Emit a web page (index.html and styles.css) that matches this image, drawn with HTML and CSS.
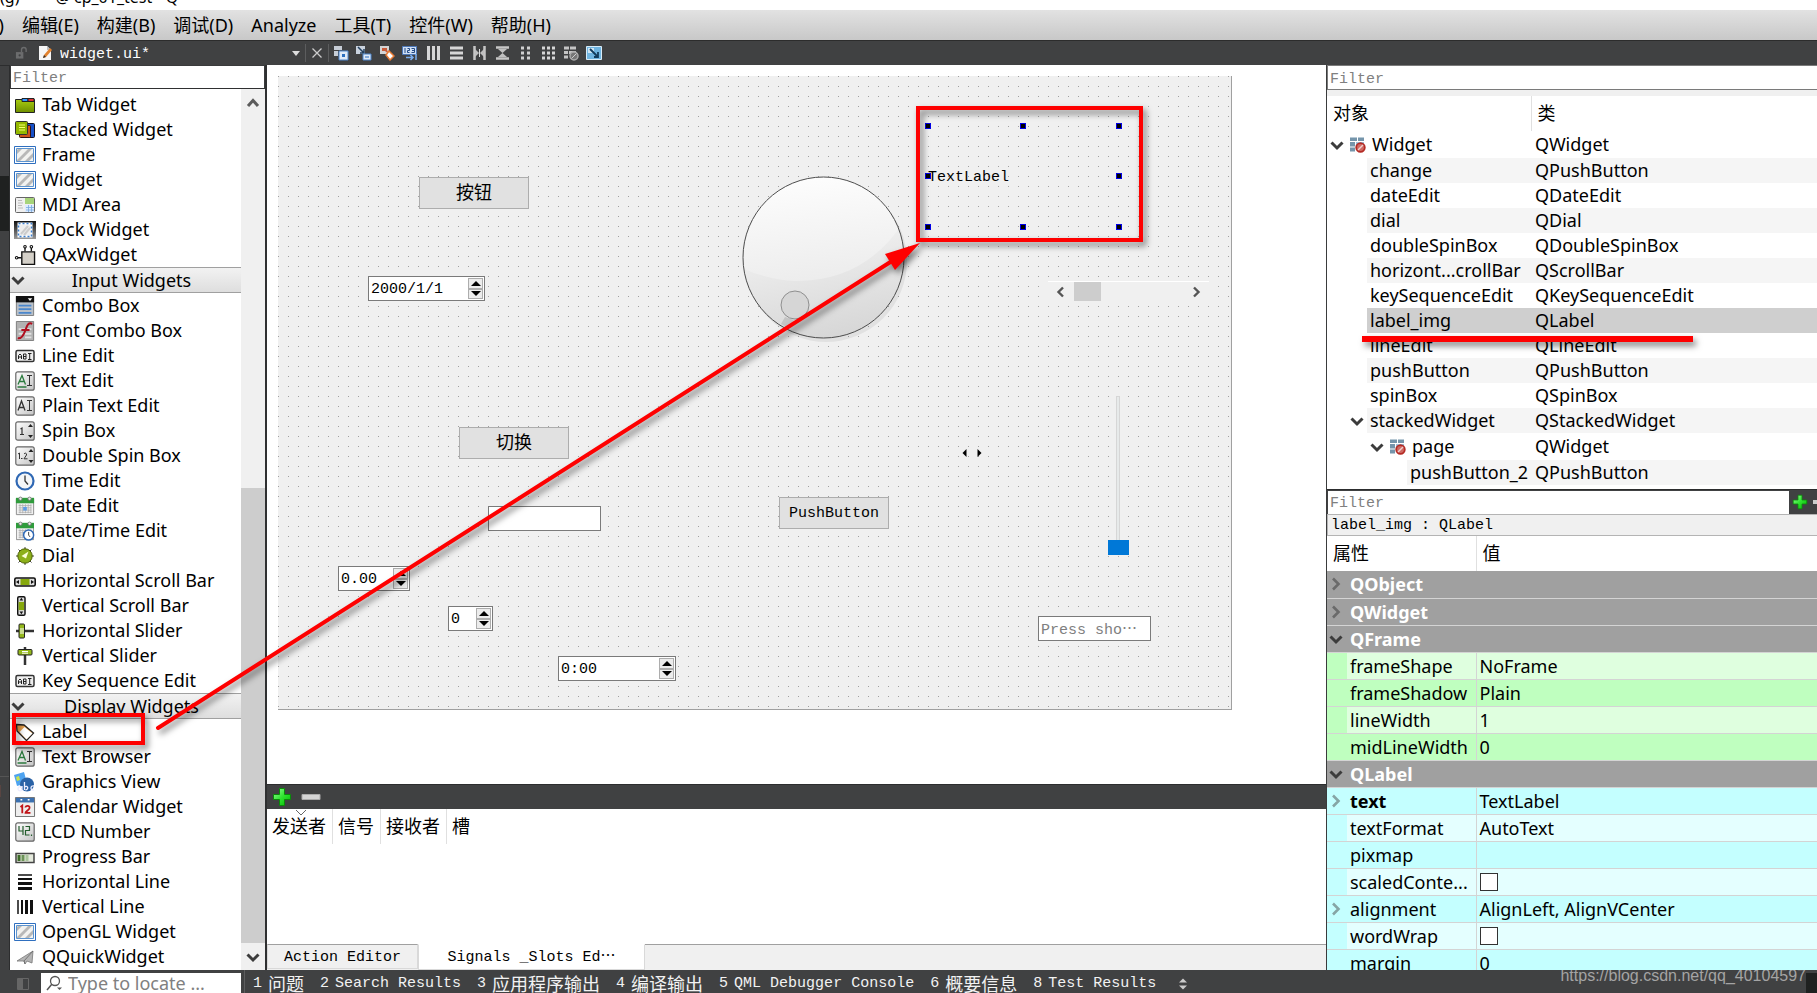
FILE: index.html
```html
<!DOCTYPE html>
<html lang="zh-CN">
<head>
<meta charset="utf-8">
<title>widget.ui</title>
<link rel="stylesheet" href="styles.css">
</head>
<body>
<svg class="defs" aria-hidden="true">
  <defs>
    <linearGradient id="gGreen" x1="0" y1="0" x2="0" y2="1"><stop offset="0" stop-color="#a8cc10"/><stop offset="1" stop-color="#6f8f00"/></linearGradient>
    <linearGradient id="gGrey" x1="0" y1="0" x2="1" y2="1"><stop offset="0" stop-color="#fff"/><stop offset="1" stop-color="#c4c4c4"/></linearGradient>
    <linearGradient id="gPlus" x1="0" y1="0" x2="1" y2="1"><stop offset="0" stop-color="#9f9"/><stop offset=".5" stop-color="#2fe32f"/><stop offset="1" stop-color="#00b400"/></linearGradient>
    <linearGradient id="gDark" x1="0" y1="0" x2="0" y2="1"><stop offset="0" stop-color="#111"/><stop offset="1" stop-color="#999"/></linearGradient>
    <linearGradient id="gDial" x1=".4" y1="0" x2=".6" y2="1"><stop offset="0" stop-color="#fff"/><stop offset="1" stop-color="#d6d6d6"/></linearGradient>
    <linearGradient id="gGloss" x1=".4" y1="0" x2=".6" y2="1"><stop offset="0" stop-color="#fff"/><stop offset="1" stop-color="#ececec"/></linearGradient>
    <clipPath id="dialClip"><circle cx="84.500" cy="83.500" r="80.500"/></clipPath>
  </defs>
  <symbol id="chev-down" viewBox="0 0 14 14"><path d="M1.5 4.5 7 10l5.500-5.500" fill="none" stroke="#3c3c3c" stroke-width="3"/></symbol>
  <symbol id="chev-right" viewBox="0 0 14 14"><path d="M4 1.500 9.500 7 4 12.500" fill="none" stroke="currentColor" stroke-width="2.600"/></symbol>
  <symbol id="chev-up" viewBox="0 0 14 14"><path d="M2 10 7 4.500 12 10" fill="none" stroke="#5c5c5c" stroke-width="3"/></symbol>
  <symbol id="i-tab" viewBox="0 0 20 20"><path d="M.5 4.500h19v13H.5z" fill="url(#gGreen)" stroke="#222"/><path d="M7 3.500h6v3H7z" fill="#39f" stroke="#222"/><path d="M13 3.500h6v3h-6z" fill="#d33" stroke="#222"/></symbol>
  <symbol id="i-stacked" viewBox="0 0 20 20"><rect x="8.500" y="3.500" width="11" height="14" rx="1" fill="#1650c8" stroke="#112"/><rect x="4.500" y="5.500" width="11" height="12" rx="1" fill="#d0521c" stroke="#311"/><rect x=".5" y="1.500" width="12" height="13" rx="1" fill="#94b800" stroke="#333"/><path d="M4 5h6M4 7.500h6M4 10h6" stroke="#f4ff70"/></symbol>
  <symbol id="i-frame" viewBox="0 0 22 20"><path d="M.5 1.500h21v17H.5z" fill="#fff" stroke="#2f6fbf"/><path d="M2.500 3.500h17v13h-17z" fill="#f2f2f0" stroke="#5d94cf"/><path d="M3 15 14 4h4L6 16H3zM3 9l5-5H4L3 5zM11 16l8-8v4l-4 4z" fill="#b8b8b8"/></symbol>
  <symbol id="i-mdi" viewBox="0 0 20 20"><rect x=".5" y="2.500" width="19" height="15" rx="1" fill="#f0f0f0" stroke="#666"/><path d="M10 3h9v6h-9z" fill="#a6d47a"/><path d="M10 10h9v7h-9z" fill="#dcebff"/><path d="M3 5.500h4M3 8h5M3 10.500h4M3 13h5" stroke="#bbb"/><path d="M11 12.500h8M11 15h8M13.500 10v7M16.500 10v7" stroke="#79a9e0" stroke-width=".8"/></symbol>
  <symbol id="i-dock" viewBox="0 0 22 20"><path d="M0 1h22v18H0z" fill="url(#gDark)"/><path d="M4.500 3.500h13v13h-13z" fill="#eee" stroke="#fff" stroke-width="2"/><path d="M4.500 3.500h13v13h-13z" fill="none" stroke="#3b7fd0" stroke-width="1.500" stroke-dasharray="2 2"/><path d="M7 14 14 6M10 15l6-7" stroke="#ccc" stroke-width="2"/></symbol>
  <symbol id="i-ax" viewBox="0 0 22 22"><path d="M7.500 7.500h14v14h-14z" fill="#d4d0c8" stroke="#111" stroke-width="1.500"/><path d="M11 7V3M18 7V3M7 14H3" stroke="#111" stroke-width="1.500"/><g fill="#fff" stroke="#111" stroke-width="1.200"><circle cx="11" cy="2" r="1.400"/><circle cx="18" cy="2" r="1.400"/><circle cx="1.800" cy="14" r="1.400"/></g></symbol>
  <symbol id="i-combo" viewBox="0 0 20 22"><path d="M.5.5h19v21H.5z" fill="#b9c0c8" stroke="#777"/><path d="M0 0h20v7H0z" fill="#111"/><path d="M13 2.500h5l-2.500 3z" fill="#fff"/><path d="M3 10.500h14M3 14.500h14M3 18.500h14" stroke="#4a86cc" stroke-width="2"/></symbol>
  <symbol id="i-font" viewBox="0 0 20 22"><path d="M.5.5h19v21H.5z" fill="#b2b2b2" stroke="#777"/><path d="M3 9h14M3 14h14M10 18h7" stroke="#e0e0e0" stroke-width="2"/><path d="M18 3c-5-2-6 3-7.500 7S7 20 2 19M6 10h9" fill="none" stroke="#b01020" stroke-width="2.200"/></symbol>
  <symbol id="i-abi" viewBox="0 0 20 20"><rect x="1" y="4.500" width="18" height="11" rx="1.500" fill="#eee" stroke="#333" stroke-width="1.500"/><path d="M3.500 13V9.500L5 8l1.500 1.500V13M3.500 11h3M8.500 8v5h2.500V8zM8.500 10.500h2.500M13 7.500h3.500M13 13.500h3.500M14.700 7.500v6" fill="none" stroke="#222"/></symbol>
  <symbol id="i-box" viewBox="0 0 20 20"><rect x=".8" y=".8" width="18.400" height="18.400" rx="2" fill="url(#gGrey)" stroke="#666" stroke-width="1.200"/></symbol>
  <symbol id="i-textedit" viewBox="0 0 20 20"><use href="#i-box"/><path d="M3 13.500 7 4.500l3.500 9M4.500 10.500h5M2.500 16h9" fill="none" stroke="#2b7a3e" stroke-width="1.300"/><path d="M12 4.500h5M12 14.500h5M14.500 4.500v10" stroke="#333"/></symbol>
  <symbol id="i-plain" viewBox="0 0 20 20"><use href="#i-box"/><path d="M3 14.500 6.500 5l3.500 9.500M4.200 11.500h4.600" fill="none" stroke="#333" stroke-width="1.300"/><path d="M12 4.500h5M12 14.500h5M14.500 4.500v10" stroke="#333"/></symbol>
  <symbol id="i-spin" viewBox="0 0 20 20"><use href="#i-box"/><path d="M5.500 8 7 7v6M5 13.500h4" fill="none" stroke="#333" stroke-width="1.200"/><path d="m13 6 2.500-3L18 6zM13 14l2.500 3 2.500-3z" fill="#222"/></symbol>
  <symbol id="i-dspin" viewBox="0 0 20 20"><use href="#i-box"/><path d="M3 8l1.500-1v6M6 12.500h1.500M9 8c1-1.500 3-1 2.500 1L9 12.800h3.500" fill="none" stroke="#333"/><path d="m13.500 6 2.500-3 2.500 3zM13.500 14l2.500 3 2.500-3z" fill="#222"/></symbol>
  <symbol id="i-clock" viewBox="0 0 20 20"><circle cx="10" cy="10" r="8.500" fill="#f4f6f8" stroke="#2f68b4" stroke-width="2.200"/><path d="M10 4.500V10l3 3.500" fill="none" stroke="#333" stroke-width="1.300"/></symbol>
  <symbol id="i-date" viewBox="0 0 20 22"><path d="M.5 3.500h19v17H.5z" fill="#f1f1f1" stroke="#888"/><path d="M0 2h20v6H0z" fill="#2f9c3c"/><g fill="#eee" stroke="#777"><circle cx="5" cy="3" r="1.800"/><circle cx="15" cy="3" r="1.800"/></g><path d="M3 10.500h14M3 13h14M3 15.500h14M3 18h14M4.500 9v10M7.500 9v10M10.500 9v10M13.500 9v10M16.500 9v10" stroke="#aaa" stroke-width=".8"/><path d="M8 12h4v4H8z" fill="#5b9be6"/></symbol>
  <symbol id="i-datetime" viewBox="0 0 20 22"><use href="#i-date"/><circle cx="14" cy="15.500" r="5.500" fill="#fff" stroke="#2f68b4" stroke-width="1.600"/><path d="M14 12v3.500l1.500 2" fill="none" stroke="#333"/></symbol>
  <symbol id="i-dial" viewBox="0 0 20 20"><path d="M10 1v18M1 10h18M3.500 3.500l13 13M16.500 3.500l-13 13" stroke="#444"/><circle cx="10" cy="10" r="7.200" fill="#8cb01a" stroke="#4c6000"/><path d="m6.500 10 7-4.500-2.500 7z" fill="#fbffd8"/></symbol>
  <symbol id="i-hsb" viewBox="0 0 22 20"><rect x=".8" y="7" width="20.400" height="8" rx="1.500" fill="#ddd" stroke="#111" stroke-width="1.600"/><path d="M6.500 8h9v6h-9z" fill="#86a80c"/><path d="m5 9-3 2 3 2zM17 9l3 2-3 2z" fill="#111"/></symbol>
  <symbol id="i-vsb" viewBox="0 0 22 22"><rect x="3" y=".8" width="8" height="20.400" rx="1.500" fill="#ddd" stroke="#111" stroke-width="1.600"/><path d="M4 6.500h6v9H4z" fill="#86a80c"/><path d="m5 5 2-3 2 3zM5 17l2 3 2-3z" fill="#111"/></symbol>
  <symbol id="i-hslider" viewBox="0 0 20 20"><path d="M1 10h18" stroke="#333" stroke-width="2.500"/><rect x="4" y="3" width="5.500" height="14" rx="1" fill="#94b81c" stroke="#222"/><path d="M6 7v6M8 7v6" stroke="#fff"/></symbol>
  <symbol id="i-vslider" viewBox="0 0 20 20"><path d="M10 1v18" stroke="#333" stroke-width="2.500"/><rect x="3" y="3.500" width="14" height="5.500" rx="1" fill="#94b81c" stroke="#222"/><path d="M7 5.500h6M7 7.200h6" stroke="#fff"/></symbol>
  <symbol id="i-label" viewBox="0 0 20 20"><path d="M1.500 2.500 9 3l9.500 8-7 7.500L2 9z" fill="#e8a04c" stroke="#222" stroke-width="1.300"/><path d="m9.500 5 8 6.500-6 6L4.500 10z" fill="#fff"/></symbol>
  <symbol id="i-graphics" viewBox="0 0 22 20"><path d="m0 3 10-3 3 11-10 3z" fill="#4ea3f0"/><path d="m2 5 3-1 1 4-3 1zM9 7l4 3-7 2z" fill="#c7e34d"/><circle cx="13" cy="12.500" r="7" fill="#2a62a6"/><path d="M4 17c0-3 4-3 4 0s-4 2-4 0M8 14v5M10.500 10v8M10.500 15c3-2 5 2 1 3M20 14c-4-1-4 5 0 4" fill="none" stroke="#eef" stroke-width="1.300"/></symbol>
  <symbol id="i-calendar" viewBox="0 0 22 22"><path d="M.5.5h21v21H.5z" fill="#eee" stroke="#666"/><path d="M1 1h20v5H1z" fill="#3b70b0"/><path d="M6 3h2M14 3h2" stroke="#fff" stroke-width="1.500"/><path d="m6 11 2-1.500V18M11.500 11.500c0-2.500 5-2.500 4.500.5 0 2-4.500 4-4.500 5.500H17" fill="none" stroke="#c01418" stroke-width="2"/></symbol>
  <symbol id="i-lcd" viewBox="0 0 20 20"><use href="#i-box"/><path d="M4 4v5h4M8 4v9M10.500 4.500h4v4h-4v4.500h4M16.500 12.500v1.500" fill="none" stroke="#235c2c" stroke-width="1.200"/></symbol>
  <symbol id="i-progress" viewBox="0 0 20 20"><rect x="1" y="6.500" width="18" height="9" fill="#e4e9dc" stroke="#444" stroke-width="1.500"/><path d="M2.500 8h3v6h-3z" fill="#3d6b28"/><path d="M6.500 8h3v6h-3z" fill="#6b9357"/><path d="M10.500 8h3v6h-3z" fill="#a9c49b"/></symbol>
  <symbol id="i-hline" viewBox="0 0 20 20"><path d="M3 3h14" stroke="#111" stroke-width="1.500"/><path d="M3 7h14" stroke="#111" stroke-width="2"/><path d="M3 11.500h14M3 16.500h14" stroke="#111" stroke-width="3"/></symbol>
  <symbol id="i-vline" viewBox="0 0 20 20"><path d="M3 3v14" stroke="#111" stroke-width="1.500"/><path d="M7 3v14" stroke="#111" stroke-width="2"/><path d="M11.500 3v14M16.500 3v14" stroke="#111" stroke-width="3"/></symbol>
  <symbol id="i-quick" viewBox="0 0 20 20"><path d="M2 14 18 4l-1 12-5-2-2 3-1-3z" fill="#b5b5b5" stroke="#777" stroke-width=".8"/><path d="M18 4 9 14l1 3" fill="none" stroke="#666" stroke-width=".8"/></symbol>
  <symbol id="i-form" viewBox="0 0 16 16"><path d="M0 .5h7v3.500H0zM8 .5h6v3.500H8zM0 5h5v4.500H0zM0 10.500h5v4H0z" fill="#7595ab"/><path d="M6 5h8v4.500H6z" fill="#9fc2dc"/><circle cx="10.500" cy="10.500" r="4.300" fill="#cf6a64" stroke="#b42b25" stroke-width="1.800"/><path d="m8 13 5-5" stroke="#f0d0ce" stroke-width="1.400"/></symbol>
  <symbol id="i-plus" viewBox="0 0 20 20"><path d="M7.500 1.500h5v6h6v5h-6v6h-5v-6h-6v-5h6z" fill="url(#gPlus)" stroke="#0a8a0a"/></symbol>
</svg>

<div class="titlebar"><span>(g)</span><span>@ cp_01_test - Q</span></div>

<nav class="menubar">
  <button class="cut">)</button><button>编辑(E)</button><button>构建(B)</button><button>调试(D)</button><button>Analyze</button><button>工具(T)</button><button>控件(W)</button><button>帮助(H)</button>
</nav>

<div class="toolbar">
  <span class="file-icons">
    <svg class="ic-lock" viewBox="0 0 14 14"><path d="M1 6h8v7H1z" fill="#6b6c6d"/><path d="M7 6V3.500a2.500 2.500 0 0 1 5 0V6" fill="none" stroke="#6b6c6d" stroke-width="1.500"/><circle cx="5" cy="9.500" r="1.200" fill="#404142"/></svg>
    <svg class="ic-doc" viewBox="0 0 15 16"><path d="M1 1h8l4 4v10H1z" fill="#f6f6f6"/><path d="M9 1v4h4z" fill="#bbb"/><path d="m5 13 1-3 6-7 2 2-6 7z" fill="#e2822e"/><path d="m5 13 1-3 2 2z" fill="#333"/></svg>
  </span>
  <select class="file-select" aria-label="文件"><option>widget.ui*</option></select>
  <svg class="ic-drop" viewBox="0 0 8 5"><path d="M0 0h8L4 5z" fill="#ddd"/></svg>
  <button class="close" aria-label="关闭"><svg viewBox="0 0 12 12"><path d="m1.500 1.500 9 9M10.500 1.500l-9 9" stroke="#ccc" stroke-width="1.300"/></svg></button>
  <div class="tools">
    <button aria-label="编辑控件"><svg viewBox="0 0 16 16"><path d="M1 1h8v4H1zM1 6h4v5H1z" fill="#c6cdd6"/><path d="M6 6h9v9H6z" fill="#dfeaf8" stroke="#4d86cc"/><path d="M9 9h3v3H9z" fill="#2b6fc0"/></svg></button>
    <button aria-label="编辑信号/槽"><svg viewBox="0 0 16 16"><path d="M0 1h9v8H0z" fill="#c9d2de"/><path d="m2 2 6 6M8 4v4H4" stroke="#23405f" stroke-width="1.500" fill="none"/><path d="M7 9h8v6H7z" fill="#dfeaf8" stroke="#4d86cc"/><path d="M9 12h4" stroke="#2b6fc0"/></svg></button>
    <button aria-label="编辑伙伴"><svg viewBox="0 0 16 16"><path d="M1 1h9v8H1z" fill="#d4d4d4"/><path d="M3 3h5v2l2 4-4-3H3z" fill="#c95b3a"/><path d="m10 6 5 5-4 4-4-5z" fill="#fff" stroke="#e77b35" stroke-width="1.500"/></svg></button>
    <button aria-label="编辑 Tab 顺序"><svg viewBox="0 0 16 16"><path d="M.5 1.500h14v8H.5z" fill="#cfe0f5" stroke="#4d78b8"/><path d="M3 3v5M5.500 3.500h2v2h-2v2h2M9.500 3.500h3v4h-3M10 5.500h2.500" fill="none" stroke="#234a86"/><path d="M4 12.500h7M8.500 10l2.500 2.500L8.500 15M14 9v6" fill="none" stroke="#7aaef0" stroke-width="1.500"/></svg></button>
    <button aria-label="水平布局"><svg viewBox="0 0 16 16"><path d="M3.500 1v14M8.500 1v14M13.500 1v14" stroke="#d6d6d6" stroke-width="3"/></svg></button>
    <button aria-label="垂直布局"><svg viewBox="0 0 16 16"><path d="M2 3h13M2 8h13M2 13h13" stroke="#d6d6d6" stroke-width="3"/></svg></button>
    <button aria-label="水平分裂"><svg viewBox="0 0 16 16"><path d="M3.500 1v14M13.500 1v14" stroke="#c6c6c6" stroke-width="2.500"/><path d="m4 4 4 4-4 4zM13 4 9 8l4 4z" fill="#c0c0c0"/><path d="M8.500 4v8" stroke="#ddd"/></svg></button>
    <button aria-label="垂直分裂"><svg viewBox="0 0 16 16"><path d="M2 2.500h13M2 13.500h13" stroke="#c6c6c6" stroke-width="2.500"/><path d="m4 4 4.500 4L13 4zM4 12l4.500-4 4.500 4z" fill="#c0c0c0"/></svg></button>
    <button aria-label="表单布局"><svg viewBox="0 0 16 16"><path d="M4 3h3M10 3h3M4 8h3M10 8h3M4 13h3M10 13h3" stroke="#d0d0d0" stroke-width="3"/></svg></button>
    <button aria-label="栅格布局"><svg viewBox="0 0 16 16"><path d="M2 3h3M7 3h3M12 3h3M2 8h3M7 8h3M12 8h3M2 13h3M7 13h3M12 13h3" stroke="#d6d6d6" stroke-width="3"/></svg></button>
    <button aria-label="打破布局"><svg viewBox="0 0 16 16"><path d="M1 3h5M7 3h6M1 7.500h4M6 7.500h7M1 12h4" stroke="#c4c4c4" stroke-width="3"/><circle cx="11" cy="11" r="4" fill="#777" stroke="#aaa" stroke-width="1.500"/><path d="m8.500 13.500 5-5" stroke="#ccc"/></svg></button>
    <button aria-label="调整大小"><svg viewBox="0 0 16 16"><path d="M.5 1.500h15v13H.5z" fill="#6fb4e0" stroke="#d8ecf8"/><path d="M2 3h6v5H2z" fill="#cfe6f5"/><path d="m4 4 7 7M12 7v5H8" fill="none" stroke="#123c5c" stroke-width="1.800"/></svg></button>
  </div>
</div>

<div class="workspace">
  <div class="gutter"><i class="gutter-mark"></i><span class="gutter-num">1</span></div>

  <aside class="widgetbox">
    <input class="filter" type="text" placeholder="Filter" aria-label="Filter">
    <div class="box-body">
      <div class="box-list">
        <ul>
          <li><svg><use href="#i-tab"/></svg>Tab Widget</li>
          <li><svg><use href="#i-stacked"/></svg>Stacked Widget</li>
          <li><svg><use href="#i-frame"/></svg>Frame</li>
          <li><svg><use href="#i-frame"/></svg>Widget</li>
          <li><svg><use href="#i-mdi"/></svg>MDI Area</li>
          <li><svg><use href="#i-dock"/></svg>Dock Widget</li>
          <li><svg><use href="#i-ax"/></svg>QAxWidget</li>
        </ul>
        <h3><svg><use href="#chev-down"/></svg><span>Input Widgets</span></h3>
        <ul>
          <li><svg><use href="#i-combo"/></svg>Combo Box</li>
          <li><svg><use href="#i-font"/></svg>Font Combo Box</li>
          <li><svg><use href="#i-abi"/></svg>Line Edit</li>
          <li><svg><use href="#i-textedit"/></svg>Text Edit</li>
          <li><svg><use href="#i-plain"/></svg>Plain Text Edit</li>
          <li><svg><use href="#i-spin"/></svg>Spin Box</li>
          <li><svg><use href="#i-dspin"/></svg>Double Spin Box</li>
          <li><svg><use href="#i-clock"/></svg>Time Edit</li>
          <li><svg><use href="#i-date"/></svg>Date Edit</li>
          <li><svg><use href="#i-datetime"/></svg>Date/Time Edit</li>
          <li><svg><use href="#i-dial"/></svg>Dial</li>
          <li><svg><use href="#i-hsb"/></svg>Horizontal Scroll Bar</li>
          <li><svg><use href="#i-vsb"/></svg>Vertical Scroll Bar</li>
          <li><svg><use href="#i-hslider"/></svg>Horizontal Slider</li>
          <li><svg><use href="#i-vslider"/></svg>Vertical Slider</li>
          <li><svg><use href="#i-abi"/></svg>Key Sequence Edit</li>
        </ul>
        <h3><svg><use href="#chev-down"/></svg><span>Display Widgets</span></h3>
        <ul>
          <li><svg><use href="#i-label"/></svg>Label</li>
          <li><svg><use href="#i-textedit"/></svg>Text Browser</li>
          <li><svg><use href="#i-graphics"/></svg>Graphics View</li>
          <li><svg><use href="#i-calendar"/></svg>Calendar Widget</li>
          <li><svg><use href="#i-lcd"/></svg>LCD Number</li>
          <li><svg><use href="#i-progress"/></svg>Progress Bar</li>
          <li><svg><use href="#i-hline"/></svg>Horizontal Line</li>
          <li><svg><use href="#i-vline"/></svg>Vertical Line</li>
          <li><svg><use href="#i-frame"/></svg>OpenGL Widget</li>
          <li><svg><use href="#i-quick"/></svg>QQuickWidget</li>
        </ul>
      </div>
      <div class="vscroll">
        <button aria-label="向上"><svg><use href="#chev-up"/></svg></button>
        <div class="vtrack"><div class="vthumb"></div></div>
        <button aria-label="向下"><svg><use href="#chev-down"/></svg></button>
      </div>
    </div>
  </aside>

  <main class="center">
    <div class="canvas">
      <div class="form">
        <button class="push w-button">按钮</button>
        <button class="push w-change">切换</button>
        <button class="push w-push">PushButton</button>
        <span class="spin w-date"><input type="text" value="2000/1/1" aria-label="dateEdit"><span class="steps"><button aria-label="增加"></button><button aria-label="减少"></button></span></span>
        <input class="line w-line" type="text" aria-label="lineEdit">
        <span class="spin w-double"><input type="text" value="0.00" aria-label="doubleSpinBox"><span class="steps"><button aria-label="增加"></button><button aria-label="减少"></button></span></span>
        <span class="spin w-int"><input type="text" value="0" aria-label="spinBox"><span class="steps"><button aria-label="增加"></button><button aria-label="减少"></button></span></span>
        <span class="spin w-time"><input type="text" value="0:00" aria-label="timeEdit"><span class="steps"><button aria-label="增加"></button><button aria-label="减少"></button></span></span>
        <input class="line w-key" type="text" placeholder="Press sho⋯" aria-label="keySequenceEdit">
        <svg class="w-dial" viewBox="0 0 172 172">
          <circle cx="87" cy="87" r="81" fill="#000" opacity=".06"/>
          <circle cx="84.500" cy="83.500" r="80.500" fill="url(#gDial)"/>
          <path d="M-10-10h190v30Q140 108 56 107 22 105-10 88z" fill="url(#gGloss)" clip-path="url(#dialClip)"/>
          <circle cx="84.500" cy="83.500" r="80.500" fill="none" stroke="#4c4c4c"/>
          <path d="m46 143 9 3-6 8-7-4z" fill="#c4c4c4"/>
          <circle cx="56" cy="131" r="14" fill="#d6d6d6" stroke="#8f8f8f"/>
        </svg>
        <div class="hscroll w-scroll">
          <button aria-label="向左"><svg viewBox="0 0 14 14"><path d="M9 2.500 4.500 7 9 11.500" fill="none" stroke="#555" stroke-width="2.400"/></svg></button>
          <div class="htrack"><div class="hthumb"></div></div>
          <button aria-label="向右"><svg viewBox="0 0 14 14"><path d="M5 2.500 9.500 7 5 11.500" fill="none" stroke="#555" stroke-width="2.400"/></svg></button>
        </div>
        <input class="w-slider" type="range" min="0" max="99" value="0" aria-label="verticalSlider">
        <svg class="w-pages" viewBox="0 0 20 8"><path d="M4.500 0v8L.5 4zM15.500 0v8l4-4z"/></svg>
        <div class="w-label"><span>TextLabel</span>
          <i class="h nw"></i><i class="h n"></i><i class="h ne"></i><i class="h w"></i><i class="h e"></i><i class="h sw"></i><i class="h s"></i><i class="h se"></i>
        </div>
      </div>
    </div>
    <section class="signals">
      <div class="signal-bar">
        <button aria-label="添加"><svg><use href="#i-plus"/></svg></button>
        <button aria-label="删除"><svg viewBox="0 0 20 20"><path d="M1 7.500h18v5H1z" fill="#d4d4d4" stroke="#aaa"/></svg></button>
      </div>
      <div class="signal-table">
        <table><thead><tr><th><svg class="sort" viewBox="0 0 12 6"><path d="m1 0 5 5 5-5" fill="none" stroke="#666"/></svg>发送者</th><th>信号</th><th>接收者</th><th>槽</th></tr></thead></table>
      </div>
      <div class="tabs">
        <button class="tab">Action Editor</button><button class="tab active">Signals _Slots Ed⋯</button><span class="tab-rest"></span>
      </div>
    </section>
  </main>

  <aside class="inspector">
    <div class="object-filter"><input type="text" placeholder="Filter" aria-label="Filter"></div>
    <table class="objects">
      <colgroup><col class="c-name"><col></colgroup>
      <thead><tr><th>对象</th><th>类</th></tr></thead>
      <tbody>
        <tr class="tall"><td><div class="root"><svg class="ch"><use href="#chev-down"/></svg><svg class="fi"><use href="#i-form"/></svg>Widget</div></td><td>QWidget</td></tr>
        <tr class="alt"><td><div class="l1">change</div></td><td>QPushButton</td></tr>
        <tr><td><div class="l1">dateEdit</div></td><td>QDateEdit</td></tr>
        <tr class="alt"><td><div class="l1">dial</div></td><td>QDial</td></tr>
        <tr><td><div class="l1">doubleSpinBox</div></td><td>QDoubleSpinBox</td></tr>
        <tr class="alt"><td><div class="l1">horizont...crollBar</div></td><td>QScrollBar</td></tr>
        <tr><td><div class="l1">keySequenceEdit</div></td><td>QKeySequenceEdit</td></tr>
        <tr class="sel"><td><div class="l1">label_img</div></td><td>QLabel</td></tr>
        <tr><td><div class="l1">lineEdit</div></td><td>QLineEdit</td></tr>
        <tr class="alt"><td><div class="l1">pushButton</div></td><td>QPushButton</td></tr>
        <tr><td><div class="l1">spinBox</div></td><td>QSpinBox</td></tr>
        <tr class="alt"><td class="branch"><svg class="ch"><use href="#chev-down"/></svg><div>stackedWidget</div></td><td>QStackedWidget</td></tr>
        <tr class="tall"><td><div class="page"><svg class="ch"><use href="#chev-down"/></svg><svg class="fi"><use href="#i-form"/></svg>page</div></td><td>QWidget</td></tr>
        <tr class="alt"><td><div class="l3">pushButton_2</div></td><td>QPushButton</td></tr>
      </tbody>
    </table>
    <div class="prop-filter"><input type="text" placeholder="Filter" aria-label="Filter"><button aria-label="添加"><svg><use href="#i-plus"/></svg></button><i></i></div>
    <div class="prop-object">label_img : QLabel</div>
    <div class="prop-body">
      <table class="props">
        <colgroup><col class="p-ind"><col class="p-name"><col></colgroup>
        <thead><tr><th colspan="2">属性</th><th>值</th></tr></thead>
        <tbody>
          <tr class="group shut"><td><svg><use href="#chev-right"/></svg></td><td colspan="2">QObject</td></tr>
          <tr class="group shut"><td><svg><use href="#chev-right"/></svg></td><td colspan="2">QWidget</td></tr>
          <tr class="group"><td><svg><use href="#chev-down"/></svg></td><td colspan="2">QFrame</td></tr>
          <tr class="green light"><td></td><td>frameShape</td><td>NoFrame</td></tr>
          <tr class="green"><td></td><td>frameShadow</td><td>Plain</td></tr>
          <tr class="green light"><td></td><td>lineWidth</td><td>1</td></tr>
          <tr class="green"><td></td><td>midLineWidth</td><td>0</td></tr>
          <tr class="group"><td><svg><use href="#chev-down"/></svg></td><td colspan="2">QLabel</td></tr>
          <tr class="cyan"><td><svg><use href="#chev-right"/></svg></td><td><b>text</b></td><td>TextLabel</td></tr>
          <tr class="cyan light"><td></td><td>textFormat</td><td>AutoText</td></tr>
          <tr class="cyan"><td></td><td>pixmap</td><td></td></tr>
          <tr class="cyan light"><td></td><td><label for="scaled">scaledConte...</label></td><td><input id="scaled" type="checkbox"></td></tr>
          <tr class="cyan"><td><svg><use href="#chev-right"/></svg></td><td>alignment</td><td>AlignLeft, AlignVCenter</td></tr>
          <tr class="cyan light"><td></td><td><label for="wrap">wordWrap</label></td><td><input id="wrap" type="checkbox"></td></tr>
          <tr class="cyan"><td></td><td>margin</td><td>0</td></tr>
        </tbody>
      </table>
    </div>
  </aside>
</div>

<footer class="statusbar">
  <svg class="ic-side" viewBox="0 0 12 12"><path d="M.5.5h11v11H.5z" fill="none" stroke="#666"/><path d="M1 1h5v10H1z" fill="#666"/></svg>
  <label class="locate"><svg viewBox="0 0 16 16"><circle cx="9" cy="6" r="4.500" fill="none" stroke="#555" stroke-width="1.300"/><path d="m6 9-5 6" stroke="#555" stroke-width="1.500"/><path d="M11 12.500h5L13.500 15z" fill="#555"/></svg><input type="text" placeholder="Type to locate ..." aria-label="Type to locate"></label>
  <div class="panes">
    <button><span>1</span><span class="cjk">问题</span></button>
    <button><span>2</span><span>Search Results</span></button>
    <button><span>3</span><span class="cjk">应用程序输出</span></button>
    <button><span>4</span><span class="cjk">编译输出</span></button>
    <button><span>5</span><span>QML Debugger Console</span></button>
    <button><span>6</span><span class="cjk">概要信息</span></button>
    <button><span>8</span><span>Test Results</span></button>
    <svg class="updown" viewBox="0 0 8 12"><path d="m0 4.500 4-4 4 4zM0 7.500l4 4 4-4z" fill="#ccc"/></svg>
  </div>
  <span class="watermark">https://blog.csdn.net/qq_40104597</span>
  <span class="corner"></span>
</footer>

<svg class="marks" viewBox="0 0 1817 993" aria-hidden="true">
  <g fill="none" stroke="#fe0000" stroke-width="4">
    <rect x="14" y="715" width="129" height="28"/>
    <rect x="918" y="108" width="223" height="132"/>
    <path d="M158 728 892 261" stroke-linecap="round"/>
    <path d="M1362 339h331" stroke-width="6"/>
  </g>
  <path d="m920 243-35 11 5 8 5 8z" fill="#fe0000"/>
</svg>
</body>
</html>
```

FILE: styles.css
```css
* { box-sizing: border-box; }
html, body { height: 100%; }
body {
  margin: 0;
  display: flex;
  flex-direction: column;
  overflow: hidden;
  position: relative;
  background: #404142;
  color: #000;
  font: 18px/25px "Noto Sans", "Noto Sans CJK SC", sans-serif;
}
button, input, select { font: inherit; color: inherit; margin: 0; padding: 0; border: 0; border-radius: 0; background: none; }
button { white-space: nowrap; }
input { min-width: 0; }
ul { margin: 0; padding: 0; list-style: none; }
table { border-collapse: collapse; border-spacing: 0; }
th, td { padding: 0; text-align: left; font-weight: 400; white-space: nowrap; }
svg { display: block; flex: none; }
.defs { position: absolute; width: 0; height: 0; }

.titlebar { flex: none; height: 10px; padding-bottom: 4px; background: #fff; overflow: hidden; display: flex; align-items: flex-end; gap: 36px; font-size: 16px; line-height: 18px; white-space: nowrap; }

.menubar { flex: none; height: 31px; display: flex; gap: 18px; background: linear-gradient(#e2e2e2, #c8c8c8); border-bottom: 1px solid #2c2c2c; overflow: hidden; }
.menubar .cut { width: 4px; display: flex; justify-content: flex-end; align-items: center; }

.toolbar { flex: none; height: 24px; display: flex; align-items: center; background: #404142; color: #fff; }
.file-icons { display: flex; gap: 10px; padding-left: 15px; width: 60px; align-items: center; }
.ic-lock { width: 13px; height: 14px; }
.ic-doc { width: 15px; height: 16px; }
.file-select { width: 232px; appearance: none; padding-top: 3px; font: 15px/21px "Liberation Mono", monospace; }
.ic-drop { width: 8px; height: 5px; margin-right: 5px; }
.close { width: 24px; height: 18px; display: flex; align-items: center; justify-content: center; border-left: 1px solid #5c5d5e; border-right: 1px solid #5c5d5e; }
.close svg { width: 12px; height: 12px; }
.tools { display: flex; }
.tools button { width: 23px; height: 22px; display: flex; align-items: center; justify-content: center; }
.tools svg { width: 16px; height: 16px; }

.workspace { flex: 1; min-height: 0; display: flex; }
.gutter { flex: none; width: 10px; border-right: 1px solid #2c2d2e; border-top: 1px solid #2c2d2e; padding-top: 110px; overflow: hidden; color: #e6d6a8; }
.gutter-mark { display: block; height: 55px; background: #1f2120; margin-bottom: 545px; }
.gutter-num { display: block; border-top: 1px solid #555; margin-left: -6px; line-height: 28px; font-size: 16px; }

.widgetbox { flex: none; width: 257px; display: flex; flex-direction: column; background: #fff; border-right: 2px solid #2f3031; }
.filter { flex: none; height: 24px; border: 1px solid #3a3b3c; border-bottom-color: #2f3031; padding: 3px 2px 0; font: 15px/19px "Liberation Mono", monospace; }
input::placeholder { color: #808080; opacity: 1; }
.box-body { flex: 1; min-height: 0; display: flex; }
.box-list { flex: 1; overflow: hidden; padding-top: 3px; }
.box-list li { height: 25px; display: flex; align-items: center; gap: 6px; padding-left: 4px; white-space: nowrap; }
.box-list li svg { width: 22px; height: 20px; }
.box-list h3 { margin: 0; height: 26px; display: flex; align-items: center; font-size: 18px; font-weight: 400; background: linear-gradient(#f2f2f2, #dedede); border: 1px solid #a0a0a0; border-width: 1px 0; }
.box-list h3 svg { width: 14px; height: 14px; margin-left: 1px; }
.box-list h3 span { flex: 1; text-align: center; padding-right: 3px; }
.vscroll { flex: none; width: 24px; display: flex; flex-direction: column; background: #f0f0f0; }
.vscroll button { height: 27px; display: flex; align-items: center; justify-content: center; }
.vscroll svg { width: 14px; height: 14px; }
.vtrack { flex: 1; display: flex; flex-direction: column; justify-content: flex-end; }
.vthumb { height: 55%; background: #cdcdcd; }

.center { flex: 1; min-width: 0; display: flex; flex-direction: column; background: #fff; }
.canvas { flex: 1; min-height: 0; overflow: hidden; padding: 11px; }
.form { position: relative; width: 954px; height: 634px; background: conic-gradient(at 1px 1px, transparent 75%, #a0a0a0 0) 0 0 / 10px 10px #f0f0f0; border: 1px solid #a0a0a0; border-width: 0 1px 1px 0; font: 15px/22px "Liberation Mono", "Noto Sans CJK SC", monospace; }
.form > * { position: absolute; }
.push { width: 110px; height: 32px; padding-top: 2px; background: #e1e1e1; border: 1px solid #adadad; }
.w-button { left: 141px; top: 101px; font-size: 18px; }
.w-change { left: 181px; top: 351px; font-size: 18px; }
.w-push { left: 501px; top: 421px; }
.line, .spin { height: 25px; background: #fff; border: 1px solid #7a7a7a; }
.line { width: 113px; padding: 3px 2px 0; }
.spin { display: flex; padding: 1px 1px 1px 2px; }
.spin input { flex: 1; width: 0; padding-top: 3px; }
.steps { width: 15px; display: flex; flex-direction: column; }
.steps button { flex: 1; border: 1px solid #adadad; background: #ececec; display: flex; align-items: center; justify-content: center; }
.steps button::before { content: ""; border: 5px solid transparent; border-top-width: 0; border-bottom-color: #000; }
.steps button:last-child::before { border-top: 5px solid #000; border-bottom: 0; }
.w-date { left: 90px; top: 200px; width: 117px; }
.w-line { left: 210px; top: 430px; }
.w-double { left: 60px; top: 490px; width: 72px; }
.w-int { left: 170px; top: 530px; width: 45px; }
.w-time { left: 280px; top: 580px; width: 118px; }
.w-key { left: 760px; top: 540px; }
.w-dial { left: 461px; top: 98px; width: 172px; height: 172px; }
.w-scroll { left: 770px; top: 205px; width: 161px; height: 20px; display: flex; border-top: 1px solid #fff; background: #f0f0f0; }
.hscroll button { width: 26px; display: flex; align-items: center; justify-content: center; }
.hscroll svg { width: 14px; height: 14px; }
.htrack { flex: 1; display: flex; }
.hthumb { width: 27px; background: #cdcdcd; }
.w-slider { left: 830px; top: 320px; width: 21px; height: 159px; appearance: none; writing-mode: vertical-lr; direction: rtl; background: linear-gradient(#e7eaea, #e7eaea) 9px 1px / 2px 157px no-repeat, linear-gradient(#d6d6d6, #d6d6d6) 8px 0 / 4px 159px no-repeat; }
.w-slider::-webkit-slider-thumb { appearance: none; width: 21px; height: 15px; background: #0078d7; }
.w-pages { left: 684px; top: 373px; width: 20px; height: 8px; }
.w-label { left: 647px; top: 47px; width: 197px; height: 107px; display: flex; align-items: center; padding: 3px 0 0 3px; }
.h { position: absolute; width: 6px; height: 6px; background: #000; border: 1px solid #0000e6; }
.nw, .n, .ne { top: 0; }
.w, .e { top: 50px; }
.sw, .s, .se { bottom: 0; }
.nw, .w, .sw { left: 0; }
.n, .s { left: 95px; }
.ne, .e, .se { right: 0; }

.signals { flex: none; height: 186px; display: flex; flex-direction: column; }
.signal-bar { flex: none; height: 25px; display: flex; align-items: center; gap: 9px; padding-left: 5px; background: #404142; border-top: 1px solid #2c2d2e; }
.signal-bar svg { width: 20px; height: 20px; }
.signal-table { flex: 1; }
.signal-table th { position: relative; height: 35px; padding: 0 6px 0 5px; border-right: 1px solid #e0e0e0; }
.signal-table th:last-child { border: 0; }
.sort { position: absolute; top: 1px; left: 28px; width: 12px; height: 6px; }
.tabs { flex: none; height: 26px; display: flex; background: #f0f0f0; font: 15px/22px "Liberation Mono", "Noto Sans CJK SC", monospace; }
.tab { width: 151px; padding-top: 2px; border: 1px solid #d9d9d9; border-top-color: #a0a0a0; margin-bottom: 1px; background: #f0f0f0; }
.tab.active { width: 227px; border-top-color: #fff; background: #fff; margin: 0; }
.tab-rest { flex: 1; border-top: 1px solid #a0a0a0; }

.inspector { flex: none; width: 491px; display: flex; flex-direction: column; background: #fff; border-left: 1px solid #3a3b3c; overflow: hidden; }
.object-filter { flex: none; height: 31px; background: #f0f0f0; }
.object-filter input { display: block; width: 100%; height: 25px; padding: 4px 2px 0; border: 1px solid #7a7a7a; border-right: 0; background: #fff; font: 15px/19px "Liberation Mono", monospace; }
.objects { width: 100%; table-layout: fixed; }
.c-name { width: 204px; }
.objects th { height: 35px; padding-left: 6px; }
.objects th:first-child { border-right: 1px solid #e0e0e0; }
.objects td { height: 25px; line-height: 25px; }
.objects td:last-child { padding-left: 4px; }
.objects .tall td { height: 27px; }
.objects .alt td:last-child, .objects .alt td > div { background: #f5f5f5; }
.objects .sel td:last-child, .objects .sel td > div { background: #cfcfcf; }
.l1 { margin-left: 40px; padding-left: 3px; }
.l3 { margin-left: 80px; padding-left: 3px; }
.root, .page, .branch { display: flex; align-items: center; }
.root { padding-left: 3px; }
.page { padding-left: 43px; }
.branch { padding-left: 23px; }
.branch div { flex: 1; margin-left: 3px; padding-left: 3px; }
.ch { width: 14px; height: 14px; }
.fi { width: 16px; height: 16px; margin: 0 6px; }
.prop-filter { flex: none; height: 25px; margin-top: 4px; display: flex; align-items: center; background: #404142; border-top: 1px solid #2c2d2e; }
.prop-filter input { flex: 1; height: 23px; margin-left: 1px; padding: 3px 2px 0; background: #fff; font: 15px/19px "Liberation Mono", monospace; }
.prop-filter button { width: 24px; padding-left: 3px; }
.prop-filter svg { width: 16px; height: 16px; }
.prop-filter i { width: 4px; height: 4px; background: #ccc; }
.prop-object { flex: none; height: 22px; padding: 2px 3px 0; background: #f0f0f0; border: 1px solid #b4b4b4; border-right: 0; font: 15px/18px "Liberation Mono", monospace; }
.prop-body { flex: 1; min-height: 0; overflow: hidden; }
.props { width: 100%; table-layout: fixed; }
.p-ind { width: 20px; }
.p-name { width: 129px; }
.props th { height: 35px; padding-left: 6px; }
.props th:first-child { border-right: 1px solid #e0e0e0; }
.props td { height: 27px; line-height: 26px; border-bottom: 1px solid #d4d4d4; padding-left: 3px; overflow: hidden; }
.props td:nth-child(2):not([colspan]) { border-right: 1px solid #d4d4d4; }
.props td:first-child { padding-left: 2px; }
.props svg { width: 14px; height: 14px; color: #86a5a5; }
.group td { background: #a0a0a0; color: #fff; font-weight: 700; }
.group svg { color: #6a6a6a; }
.green td { background: #bfffbf; }
.green.light td:not(:first-child) { background: #dfffdf; }
.cyan td { background: #c4ffff; }
.cyan.light td:not(:first-child) { background: #e4ffff; }
.props input { display: block; appearance: none; width: 18px; height: 18px; background: #fff; border: 1px solid #333; }

.statusbar { flex: none; height: 23px; display: flex; align-items: stretch; background: #404142; color: #f2f2f2; overflow: hidden; }
.ic-side { width: 12px; height: 12px; margin: 8px 12px 0 17px; }
.locate { flex: none; width: 200px; margin-top: 3px; padding-left: 5px; display: flex; align-items: center; gap: 6px; background: #fff; }
.locate svg { width: 16px; height: 16px; }
.locate input { flex: 1; color: #000; }
.panes { margin-left: 3px; padding: 4px 0 0 8px; border-left: 1px solid #5c5d5e; display: flex; align-items: center; gap: 16px; font: 15px/19px "Liberation Mono", monospace; }
.panes button { display: flex; align-items: center; gap: 6px; height: 19px; }
.panes .cjk { font: 18px/19px "Noto Sans CJK SC", sans-serif; }
.updown { width: 8px; height: 12px; margin-left: 7px; }
.watermark { margin-left: auto; font: 16px/12px "Liberation Sans", sans-serif; color: #a4a4a4; }
.corner { width: 11px; margin-top: 3px; background: #1f2120; }

.marks { position: absolute; left: 0; top: 0; width: 1817px; height: 993px; pointer-events: none; filter: drop-shadow(3px 4px 3px rgba(0, 0, 0, .5)); }
```
